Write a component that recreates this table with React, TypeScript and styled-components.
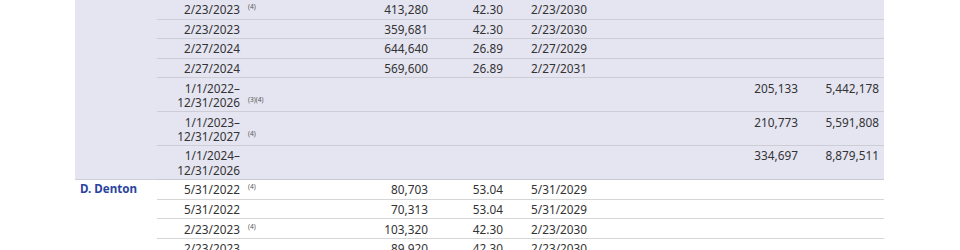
import React from "react";
import styled, { createGlobalStyle } from "styled-components";

const Global = createGlobalStyle`
  html, body { margin: 0; padding: 0; background: #ffffff; }
`;

const Page = styled.div`
  padding-left: 75px;
  width: 960px;
  box-sizing: border-box;
`;

const Table = styled.table`
  border-collapse: collapse;
  table-layout: fixed;
  width: 809px;
  font-family: "Noto Sans", "Open Sans", sans-serif;
  font-size: 11.8px;
  color: #333333;
`;

const Col = styled.col<{ $w: number }>`
  width: ${(p) => p.$w}px;
`;

const Group = styled.tbody<{ $shaded?: boolean }>`
  background: ${(p) => (p.$shaded ? "#e5e5f1" : "#ffffff")};
`;

const NameCell = styled.th<{ $last?: boolean }>`
  text-align: left;
  vertical-align: top;
  padding: 2.3px 0 2px 5px;
  line-height: 14.3px;
  font-size: 11.6px;
  font-weight: 700;
  color: #2a44a0;
  border-bottom: 1px solid ${(p) => (p.$last ? "#cfcfd8" : "transparent")};
`;

const Cell = styled.td<{ $align?: "left" | "right"; $pl?: number; $pr?: number; $line: string }>`
  vertical-align: top;
  text-align: ${(p) => p.$align ?? "right"};
  padding: 2.3px ${(p) => p.$pr ?? 0}px 2px ${(p) => p.$pl ?? 0}px;
  line-height: 14.3px;
  white-space: nowrap;
  border-bottom: 1px solid ${(p) => p.$line};
`;

const DateText = styled.span`
  display: inline-block;
  width: 83px;
  text-align: right;
  vertical-align: baseline;
`;

const Note = styled.span`
  font-size: 6.6px;
  vertical-align: 5px;
  margin-left: 8px;
  line-height: 1;
  color: #555;
`;

type Row = {
  date: string[];
  note?: string;
  shares?: string;
  price?: string;
  expiry?: string;
  units?: string;
  value?: string;
};

const groupA: Row[] = [
  { date: ["2/23/2023"], note: "(4)", shares: "413,280", price: "42.30", expiry: "2/23/2030" },
  { date: ["2/23/2023"], shares: "359,681", price: "42.30", expiry: "2/23/2030" },
  { date: ["2/27/2024"], shares: "644,640", price: "26.89", expiry: "2/27/2029" },
  { date: ["2/27/2024"], shares: "569,600", price: "26.89", expiry: "2/27/2031" },
  { date: ["1/1/2022–", "12/31/2026"], note: "(3)(4)", units: "205,133", value: "5,442,178" },
  { date: ["1/1/2023–", "12/31/2027"], note: "(4)", units: "210,773", value: "5,591,808" },
  { date: ["1/1/2024–", "12/31/2026"], units: "334,697", value: "8,879,511" },
];

const groupB: Row[] = [
  { date: ["5/31/2022"], note: "(4)", shares: "80,703", price: "53.04", expiry: "5/31/2029" },
  { date: ["5/31/2022"], shares: "70,313", price: "53.04", expiry: "5/31/2029" },
  { date: ["2/23/2023"], note: "(4)", shares: "103,320", price: "42.30", expiry: "2/23/2030" },
  { date: ["2/23/2023"], shares: "89,920", price: "42.30", expiry: "2/23/2030" },
];

const widths = [82, 133, 142, 75, 113, 100, 82, 82];

function GroupRows({ name, rows, shaded }: { name: string; rows: Row[]; shaded?: boolean }) {
  const inner = shaded ? "#cdcdd6" : "#d6d6d6";
  return (
    <Group $shaded={shaded}>
      {rows.map((r, i) => {
        const line = i === rows.length - 1 && shaded ? "#c9c9d3" : inner;
        return (
          <tr key={i}>
            {i === 0 && (
              <NameCell rowSpan={rows.length} $last={shaded}>
                {name}
              </NameCell>
            )}
            <Cell $align="left" $line={line}>
              <DateText>
                {r.date.map((d, j) => (
                  <React.Fragment key={j}>
                    {j > 0 && <br />}
                    {d}
                  </React.Fragment>
                ))}
              </DateText>
              {r.note && <Note>{r.note}</Note>}
            </Cell>
            <Cell $pr={4} $line={line}>{r.shares}</Cell>
            <Cell $pr={4} $line={line}>{r.price}</Cell>
            <Cell $align="left" $pl={24} $line={line}>{r.expiry}</Cell>
            <Cell $line={line} />
            <Cell $pr={4} $line={line}>{r.units}</Cell>
            <Cell $pr={5} $line={line}>{r.value}</Cell>
          </tr>
        );
      })}
    </Group>
  );
}

export default function App() {
  return (
    <Page>
      <Global />
      <Table>
        <colgroup>
          {widths.map((w, i) => (
            <Col key={i} $w={w} />
          ))}
        </colgroup>
        <GroupRows name="" rows={groupA} shaded />
        <GroupRows name="D. Denton" rows={groupB} />
      </Table>
    </Page>
  );
}
